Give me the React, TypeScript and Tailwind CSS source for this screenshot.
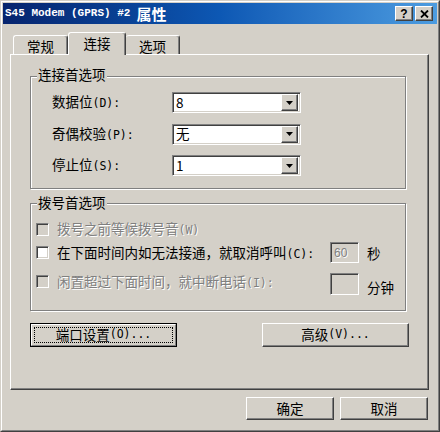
import React from "react";

const raised =
  "border border-t-white border-l-white border-r-[#404040] border-b-[#404040] shadow-[inset_-1px_-1px_0_#808080]";
const sunken =
  "border border-t-[#808080] border-l-[#808080] border-r-white border-b-white shadow-[inset_1px_1px_0_#404040,inset_-1px_-1px_0_#d4d0c8]";
const etched = "border border-[#808080] shadow-[inset_1px_1px_0_#fff,1px_1px_0_#fff]";
const dis = "text-[#808080] [text-shadow:1px_1px_0_#fff]";

const A = ({ c }: { c: string }) => (
  <span className="font-['DejaVu_Sans_Mono',monospace] text-[11.5px]">{c}</span>
);

const Check = ({ disabled }: { disabled?: boolean }) => (
  <div
    className={
      disabled
        ? "w-[13px] h-[13px] shrink-0 bg-[#d4d0c8] border border-t-[#808080] border-l-[#808080] border-r-white border-b-white shadow-[inset_1px_1px_0_#404040,inset_-1px_-1px_0_#d4d0c8]"
        : "w-[13px] h-[13px] shrink-0 bg-white border border-t-[#808080] border-l-[#808080] border-r-white border-b-white shadow-[inset_1px_1px_0_#404040,inset_-1px_-1px_0_#d4d0c8]"
    }
  />
);

const Arrow = () => (
  <svg width="7" height="4" viewBox="0 0 7 4">
    <polygon points="0,0 7,0 3.5,4" fill="#000" />
  </svg>
);

const Combo = ({ value }: { value: string }) => (
  <div className={`w-[129px] h-[21px] bg-white flex items-center ${sunken} p-[2px]`}>
    <div className="flex-1 pl-[1px] text-[13.5px] leading-none">{value}</div>
    <div className={`w-[17px] h-[17px] bg-[#d4d0c8] flex items-center justify-center ${raised}`}>
      <Arrow />
    </div>
  </div>
);

const Btn = ({ children, w }: { children: React.ReactNode; w: string }) => (
  <div className={`${w} h-[24px] bg-[#d4d0c8] flex items-center justify-center text-[13.5px] leading-none ${raised}`}>
    {children}
  </div>
);

export default function App() {
  return (
    <div className="w-[440px] h-[432px] bg-[#d4d0c8] border border-t-[#d4d0c8] border-l-[#d4d0c8] border-r-[#404040] border-b-[#404040] font-['Noto_Sans_CJK_SC',sans-serif] text-black">
      <div className="h-full border border-t-white border-l-white border-r-[#808080] border-b-[#808080] p-px flex flex-col">
        {/* Title bar */}
        <div className="h-[21px] shrink-0 flex items-center bg-gradient-to-r from-[#06246e] via-[#0d58b4] to-[#4c9ce0] pl-[2px] pr-[4px]">
          <div className="flex-1 flex items-center text-white font-bold">
            <span className="font-['Liberation_Mono',monospace] text-[11px]">S45 Modem (GPRS) #2</span>
            <span className="ml-[6px] text-[15px] leading-none">属性</span>
          </div>
          <div className="flex gap-[2px]">
            <div className={`w-[18px] h-[15px] bg-[#d4d0c8] flex items-center justify-center ${raised}`}>
              <span className="font-['Liberation_Sans',sans-serif] font-bold text-[12px] leading-none">?</span>
            </div>
            <div className={`w-[18px] h-[15px] bg-[#d4d0c8] flex items-center justify-center ${raised}`}>
              <svg width="9" height="8" viewBox="0 0 9 8">
                <path d="M1 0.5 L8 7.5 M8 0.5 L1 7.5" stroke="#000" strokeWidth="1.8" />
              </svg>
            </div>
          </div>
        </div>

        {/* Tabs */}
        <div className="mt-[8px] h-[22px] shrink-0 flex items-end pl-[10px]">
          <div className="w-[55px] h-[19px] flex justify-center pt-[2px] text-[13.5px] leading-[16px] border-t border-l border-r border-t-white border-l-white border-r-[#404040] rounded-t-[3px] shadow-[inset_-1px_0_0_#808080]">
            常规
          </div>
          <div className="relative z-10 -mb-px w-[58px] h-[23px] bg-[#d4d0c8] flex justify-center pt-[2px] text-[13.5px] leading-[16px] border-t border-l border-r border-t-white border-l-white border-r-[#404040] rounded-t-[3px] shadow-[inset_-1px_0_0_#808080]">
            连接
          </div>
          <div className="w-[54px] h-[19px] flex justify-center pt-[2px] text-[13.5px] leading-[16px] border-t border-r border-t-white border-r-[#404040] rounded-t-[3px] shadow-[inset_-1px_0_0_#808080]">
            选项
          </div>
        </div>

        {/* Panel */}
        <div className={`ml-[7px] w-[419px] h-[336px] shrink-0 flex flex-col pl-[19px] pt-[21px] ${raised}`}>
          {/* Group 1 */}
          <div className={`relative w-[376px] h-[113px] shrink-0 ${etched} pt-[15px] pl-[21px] flex flex-col gap-[10.5px]`}>
            <div className="absolute left-[6px] top-[-12px] px-[1px] bg-[#d4d0c8] text-[13.5px] leading-[18px]">
              连接首选项
            </div>
            <div className="flex items-center h-[21px]">
              <div className="w-[120px] text-[13.5px] leading-none">
                数据位<A c="(D):" />
              </div>
              <Combo value="8" />
            </div>
            <div className="flex items-center h-[21px]">
              <div className="w-[120px] text-[13.5px] leading-none">
                奇偶校验<A c="(P):" />
              </div>
              <Combo value="无" />
            </div>
            <div className="flex items-center h-[21px]">
              <div className="w-[120px] text-[13.5px] leading-none">
                停止位<A c="(S):" />
              </div>
              <Combo value="1" />
            </div>
          </div>

          {/* Group 2 */}
          <div className={`relative mt-[14px] w-[376px] h-[108px] shrink-0 ${etched} pt-[18px] pl-[5px] flex flex-col text-[13.5px] leading-[16px]`}>
            <div className="absolute left-[6px] top-[-11px] px-[1px] bg-[#d4d0c8] text-[13.5px] leading-[18px]">
              拨号首选项
            </div>
            <div className="flex items-center h-[14px] gap-[8px]">
              <Check disabled />
              <span className={dis}>
                拨号之前等候拨号音<A c="(W)" />
              </span>
            </div>
            <div className="mt-[6px] flex items-center h-[21px] gap-[8px]">
              <Check />
              <span className="w-[265px]">
                在下面时间内如无法接通，就取消呼叫<A c="(C):" />
              </span>
              <div className={`w-[29px] h-[21px] bg-[#d4d0c8] flex items-center pl-[3px] ${sunken}`}>
                <span className={`${dis} font-['Liberation_Sans',sans-serif] text-[12px] leading-none`}>60</span>
              </div>
              <span>秒</span>
            </div>
            <div className="mt-[10px] flex items-start h-[22px] gap-[8px]">
              <div className="mt-[2px] flex items-center h-[13px] gap-[8px]">
                <Check disabled />
                <span className={`${dis} w-[265px]`}>
                  闲置超过下面时间，就中断电话<A c="(I):" />
                </span>
              </div>
              <div className={`w-[29px] h-[22px] bg-[#d4d0c8] ${sunken}`} />
              <span className="self-end">分钟</span>
            </div>
          </div>

          {/* Buttons */}
          <div className="mt-[12px] flex">
            <div className="w-[147px] h-[24px] border border-black">
              <div className="h-full border border-t-white border-l-white border-r-[#808080] border-b-[#808080] p-[2px]">
                <div className="h-full border border-dotted border-black flex items-center justify-center text-[13.5px] leading-none">
                  端口设置<A c="(O)..." />
                </div>
              </div>
            </div>
            <div className="ml-[85px]">
              <Btn w="w-[147px]">
                高级<A c="(V)..." />
              </Btn>
            </div>
          </div>
        </div>

        {/* Bottom buttons */}
        <div className="mt-[7px] flex justify-end gap-[6px] pr-[9px]">
          <div className={`w-[88px] h-[23px] bg-[#d4d0c8] flex items-center justify-center text-[13.5px] leading-none ${raised}`}>
            确定
          </div>
          <div className={`w-[88px] h-[23px] bg-[#d4d0c8] flex items-center justify-center text-[13.5px] leading-none ${raised}`}>
            取消
          </div>
        </div>
      </div>
    </div>
  );
}
